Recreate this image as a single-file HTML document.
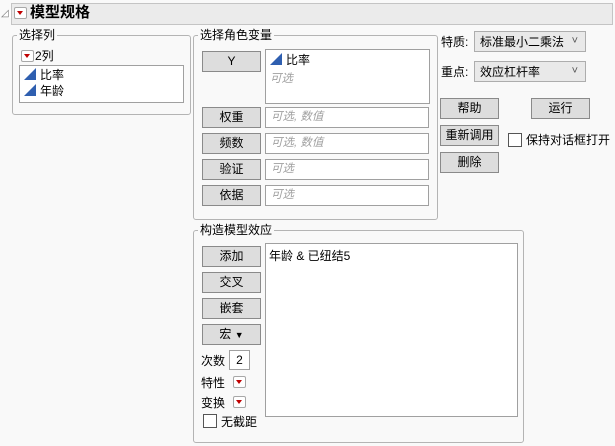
<!DOCTYPE html>
<html><head><meta charset="utf-8"><style>
body{margin:0;width:615px;height:446px;background:#f9f9f9;font-family:"Liberation Sans","Noto Sans CJK SC",sans-serif;font-size:12px;color:#000;position:relative;overflow:hidden}
.a{position:absolute}
.grp{position:absolute;border:1px solid #b4b4b4;border-radius:3px}
.lbl{position:absolute;background:#f9f9f9;padding:0 2px;font-size:12px;line-height:14px}
.btn{position:absolute;width:57px;height:19px;background:#dddddd;border:1px solid #8a8a8a;text-align:center;line-height:19px;font-size:12px}
.fld{position:absolute;background:#fff;border:1px solid #a0a0a0;height:19px;line-height:19px;padding-left:5px;color:#a0a0a0;font-style:italic;font-size:11.5px;box-sizing:border-box}
.red{position:absolute;width:11px;height:10px;border:1px solid #a8a8a8;background:#fff;border-radius:2px}
.red:after{content:"";position:absolute;left:2px;top:3px;border-left:3.5px solid transparent;border-right:3.5px solid transparent;border-top:4px solid #c00000}
.tri{display:inline-block;width:0;height:0;border-left:12px solid transparent;border-bottom:12px solid #2f5fb0;vertical-align:-1px;margin-right:4px}
.dd{position:absolute;background:#e9e9e9;border:1px solid #adadad;height:21px;line-height:21px;padding-left:5px;box-sizing:border-box;font-size:12px}
.dd:after{content:"˅";position:absolute;right:7px;top:-1px;color:#555;font-size:11px}
.cb{position:absolute;width:12px;height:12px;border:1px solid #555;background:#fff}
</style></head><body>
<div class="a" style="left:2px;top:9px;width:0;height:0;border-left:9px solid transparent;border-bottom:9px solid #fff"></div>
<div class="a" style="left:1px;top:8px;font-size:10px;color:#777">◿</div>
<div class="a" style="left:11px;top:3px;width:600px;height:20px;background:#ebebeb;border:1px solid #c4c4c4"></div>
<div class="red" style="left:14px;top:7px"></div>
<div class="a" style="left:30px;top:4px;font-size:15px;font-weight:bold;line-height:18px">模型规格</div>

<div class="grp" style="left:12px;top:35px;width:177px;height:78px"></div>
<div class="lbl" style="left:17px;top:28px">选择列</div>
<div class="red" style="left:21px;top:50px"></div>
<div class="a" style="left:35px;top:49px;line-height:14px">2列</div>
<div class="a" style="left:19px;top:65px;width:163px;height:36px;background:#fff;border:1px solid #a0a0a0"></div>
<div class="a" style="left:24px;top:67px;line-height:16px"><span class="tri"></span>比率<br><span class="tri"></span>年龄</div>

<div class="grp" style="left:193px;top:35px;width:243px;height:183px"></div>
<div class="lbl" style="left:198px;top:28px">选择角色变量</div>
<div class="btn" style="left:202px;top:51px">Y</div>
<div class="a" style="left:265px;top:49px;width:163px;height:53px;background:#fff;border:1px solid #a0a0a0"></div>
<div class="a" style="left:270px;top:52px;line-height:16px"><span class="tri"></span>比率</div>
<div class="a" style="left:270px;top:70px;color:#a0a0a0;font-style:italic;font-size:11.5px">可选</div>
<div class="btn" style="left:202px;top:107px">权重</div><div class="fld" style="left:265px;top:107px;width:164px;height:21px">可选, 数值</div>
<div class="btn" style="left:202px;top:133px">频数</div><div class="fld" style="left:265px;top:133px;width:164px;height:21px">可选, 数值</div>
<div class="btn" style="left:202px;top:159px">验证</div><div class="fld" style="left:265px;top:159px;width:164px;height:21px">可选</div>
<div class="btn" style="left:202px;top:185px">依据</div><div class="fld" style="left:265px;top:185px;width:164px;height:21px">可选</div>

<div class="a" style="left:441px;top:33px">特质:</div>
<div class="dd" style="left:474px;top:31px;width:112px">标准最小二乘法</div>
<div class="a" style="left:441px;top:63px">重点:</div>
<div class="dd" style="left:474px;top:61px;width:112px">效应杠杆率</div>
<div class="btn" style="left:440px;top:98px">帮助</div>
<div class="btn" style="left:531px;top:98px">运行</div>
<div class="btn" style="left:440px;top:125px">重新调用</div>
<div class="cb" style="left:508px;top:133px"></div>
<div class="a" style="left:526px;top:131px">保持对话框打开</div>
<div class="btn" style="left:440px;top:152px">删除</div>

<div class="grp" style="left:193px;top:230px;width:329px;height:211px"></div>
<div class="lbl" style="left:198px;top:223px">构造模型效应</div>
<div class="btn" style="left:202px;top:246px">添加</div>
<div class="btn" style="left:202px;top:272px">交叉</div>
<div class="btn" style="left:202px;top:298px">嵌套</div>
<div class="btn" style="left:202px;top:324px">宏 <span style="font-size:9px">▼</span></div>
<div class="a" style="left:265px;top:243px;width:251px;height:172px;background:#fff;border:1px solid #a0a0a0"></div>
<div class="a" style="left:269px;top:247px">年龄 &amp; 已纽结5</div>
<div class="a" style="left:201px;top:352px">次数</div>
<div class="a" style="left:229px;top:350px;width:19px;height:18px;background:#fff;border:1px solid #a0a0a0;text-align:center;line-height:18px">2</div>
<div class="a" style="left:201px;top:374px">特性</div><div class="red" style="left:233px;top:376px"></div>
<div class="a" style="left:201px;top:394px">变换</div><div class="red" style="left:233px;top:396px"></div>
<div class="cb" style="left:203px;top:414px"></div>
<div class="a" style="left:221px;top:413px">无截距</div>
</body></html>
